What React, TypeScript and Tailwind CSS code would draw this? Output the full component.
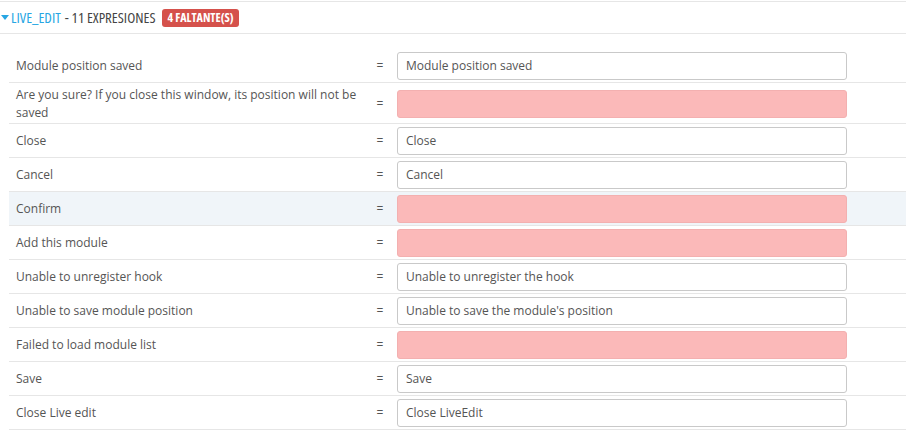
const rows: { label: string; value: string; missing?: boolean; hover?: boolean }[] = [
  { label: "Module position saved", value: "Module position saved" },
  { label: "Are you sure? If you close this window, its position will not be saved", value: "", missing: true },
  { label: "Close", value: "Close" },
  { label: "Cancel", value: "Cancel" },
  { label: "Confirm", value: "", missing: true, hover: true },
  { label: "Add this module", value: "", missing: true },
  { label: "Unable to unregister hook", value: "Unable to unregister the hook" },
  { label: "Unable to save module position", value: "Unable to save the module's position" },
  { label: "Failed to load module list", value: "", missing: true },
  { label: "Save", value: "Save" },
  { label: "Close Live edit", value: "Close LiveEdit" },
];

const App = () => {
  return (
    <div className="w-[906px] h-[440px] bg-white overflow-hidden text-[12px] text-[#555] font-['Open_Sans',sans-serif]">
      {/* HEADER */}
      <div className="mt-px border-t border-b border-[#e6e6e6] h-[33px] flex items-center font-['Open_Sans',sans-serif] font-stretch-[75%]">
        <span className="w-0 h-0 border-l-[4px] border-r-[4px] border-t-[5px] border-l-transparent border-r-transparent border-t-[#27a6e3] ml-px mr-[2px]" />
        <span className="text-[14.8px] uppercase text-[#27a6e3]">live_edit</span>
        <span className="text-[14.8px] uppercase text-[#444] ml-[4px]">- 11 expresiones</span>
        <span className="ml-[6px] h-[18px] px-[6px] rounded-[3px] bg-[#d5514b] text-white font-bold text-[12px] flex items-center">
          4 FALTANTE(S)
        </span>
      </div>

      {/* TABLE */}
      <div className="ml-[9px] mt-[15px]">
        {rows.map((r, i) => (
          <div
            key={i}
            className={`grid grid-cols-[361px_20px_1fr] items-center border-b border-[#e6e6e6] pt-[3px] pb-[2px] ${r.hover ? "bg-[#f0f5f9]" : ""}`}
          >
            <div className="px-[7px] leading-[17.5px]">{r.label}</div>
            <div className="text-center">=</div>
            <div className="pl-[7px]">
              <div
                className={`w-[450px] h-[28px] rounded-[3px] border flex items-center px-[8px] text-[12px] ${
                  r.missing ? "bg-[#fbb9b9] border-[#f3b0b0]" : "bg-white border-[#c9c9c9]"
                }`}
              >
                {r.value}
              </div>
            </div>
          </div>
        ))}
      </div>
    </div>
  );
};

export default App;
